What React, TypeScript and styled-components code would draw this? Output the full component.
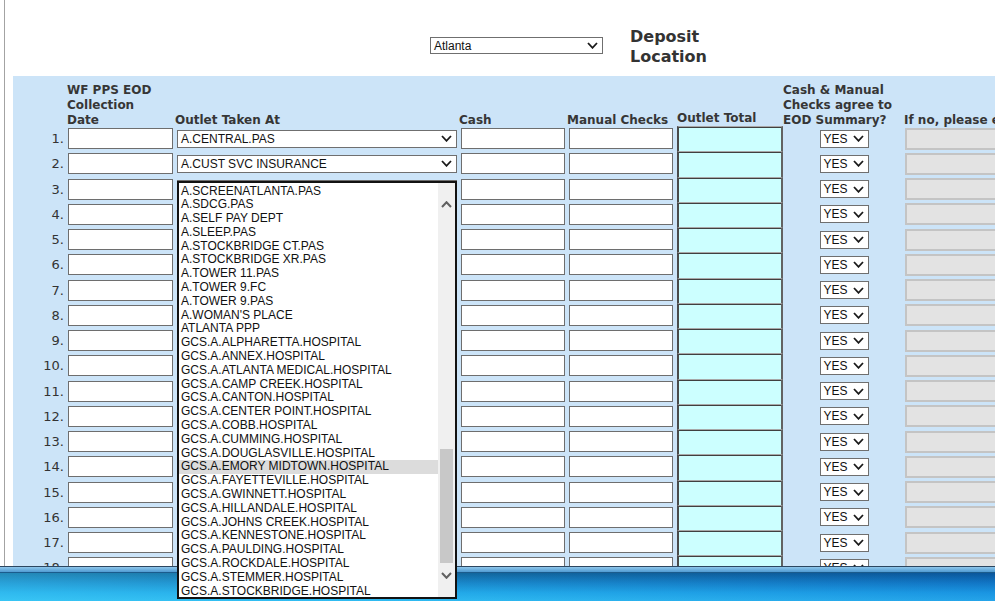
import React from 'react';
import styled, { createGlobalStyle } from 'styled-components';

const GlobalStyle = createGlobalStyle`
  html, body { margin: 0; padding: 0; background: #ffffff; overflow: hidden; }
  * { box-sizing: border-box; }
`;

const COLS = '55px 109px 284px 108px 108px 106px 122px 1fr';

const Page = styled.div`
  position: relative;
  width: 995px;
  height: 606px;
  overflow: hidden;
  padding-left: 4px;
  background: #ffffff;
`;

const Frame = styled.div`
  height: 100%;
  border-left: 1px solid #a3a3a3;
  padding-left: 8px;
  display: flex;
  flex-direction: column;
`;

const TopBar = styled.div`
  height: 76px;
  flex: none;
  display: flex;
  align-items: flex-start;
  padding-left: 417px;
`;

const SelectBox = styled.div<{ $w: number; $h: number }>`
  display: flex;
  align-items: center;
  justify-content: space-between;
  width: ${(p) => p.$w}px;
  height: ${(p) => p.$h}px;
  border: 1px solid #6f6f6f;
  background: #ffffff;
  padding: 0 4px 0 3px;
  font: 12px 'Liberation Sans', Arial, sans-serif;
  color: #111;
  white-space: nowrap;
  overflow: hidden;
`;

const LocationSelect = styled(SelectBox)`
  margin-top: 37px;
`;

const DepositTitle = styled.h2`
  margin: 27px 0 0 27px;
  font: bold 16px/20px 'DejaVu Sans', Verdana, sans-serif;
  color: #333;
`;

const Panel = styled.div`
  flex: 1;
  background: #cce4f8;
  padding-top: 6px;
  overflow: hidden;
`;

const HeadRow = styled.div`
  display: grid;
  grid-template-columns: ${COLS};
  height: 44px;
  align-items: end;
`;

const HeadCell = styled.div<{ $shift?: number; $lift?: number }>`
  font: bold 12px/15px 'DejaVu Sans', Verdana, sans-serif;
  color: #363636;
  white-space: nowrap;
  margin-left: ${(p) => p.$shift ?? 0}px;
  margin-bottom: -2px;
  padding-bottom: ${(p) => p.$lift ?? 0}px;
`;

const Row = styled.div`
  display: grid;
  grid-template-columns: ${COLS};
  height: 25.25px;
`;

const NumCell = styled.div`
  display: flex;
  align-items: center;
  justify-content: flex-end;
  padding-right: 4px;
  font: 13px 'DejaVu Sans', Verdana, sans-serif;
  color: #333;
`;

const FieldCell = styled.div<{ $center?: boolean }>`
  position: relative;
  display: flex;
  align-items: center;
  justify-content: ${(p) => (p.$center ? 'center' : 'flex-start')};
  min-width: 0;
`;

const TextBox = styled.div<{ $w: number }>`
  width: ${(p) => p.$w}px;
  height: 21px;
  border: 1px solid #6e6e6e;
  background: #ffffff;
`;

const GreyBox = styled.div`
  width: 100%;
  height: 22px;
  border: 2px solid #c4c4c4;
  border-right: none;
  background: #e3e3e3;
`;

const TotalCell = styled.div`
  height: 100%;
  background: #ccffff;
  border-left: 2px solid #4a4a4a;
  border-right: 2px solid #626262;
  border-top: 1px solid #a8a8a8;
  box-shadow: inset 0 1px 0 #404040;
`;

const ListBox = styled.div`
  position: absolute;
  left: 0;
  top: 4.5px;
  width: 280px;
  height: 418px;
  border: 2px solid #121212;
  padding-top: 1.5px;
  background: #ffffff;
  display: flex;
  z-index: 10;
`;

const Items = styled.div`
  flex: 1;
  overflow: hidden;
`;

const Item = styled.div<{ $active?: boolean }>`
  height: 13.8px;
  padding-left: 2px;
  font: 12px/13.8px 'Liberation Sans', Arial, sans-serif;
  color: #111;
  white-space: nowrap;
  background: ${(p) => (p.$active ? '#dcdcdc' : 'transparent')};
`;

const ScrollBar = styled.div`
  width: 17px;
  flex: none;
  margin-top: -1.5px;
  background: #f0f0f0;
  display: flex;
  flex-direction: column;
`;

const ScrollBtn = styled.div<{ $h: number }>`
  height: ${(p) => p.$h}px;
  flex: none;
  display: flex;
  align-items: center;
  justify-content: center;
`;

const Track = styled.div`
  flex: 1;
  padding: 0 2px;
`;

const Thumb = styled.div`
  width: 100%;
  background: #c8c8c8;
`;

const ScrollFoot = styled.div`
  height: 12px;
  flex: none;
`;

const Taskbar = styled.div`
  position: absolute;
  left: 0;
  right: 0;
  top: 566px;
  height: 40px;
  z-index: 5;
  display: flex;
  flex-direction: column;
`;

const TaskbarEdge = styled.div`
  height: 7px;
  background: linear-gradient(180deg, #2c4660 0px, #2c4660 1px, #8fc6ea 1px, #4f9bd3 6px, #1b5b8c 6px, #1b5b8c 7px);
`;

const TaskbarBody = styled.div`
  height: 28px;
  background:
    linear-gradient(90deg, rgba(80, 225, 255, 0.35) 0%, rgba(80, 225, 255, 0.1) 40%, rgba(0, 60, 200, 0.15) 100%),
    linear-gradient(180deg, #0c5a92 0%, #147fc4 35%, #1ea4e6 70%, #2bb6ef 100%);
`;

const TaskbarFoot = styled.div`
  height: 5px;
  background: #ffffff;
`;

const Chevron: React.FC<{ color?: string; w?: number; h?: number; up?: boolean; sw?: number }> = ({
  color = '#1a1a1a',
  w = 11,
  h = 7,
  up = false,
  sw = 1.8,
}) => (
  <svg width={w} height={h} viewBox={`0 0 ${w} ${h}`}>
    <polyline
      points={up ? `1,${h - 1} ${w / 2},1.2 ${w - 1},${h - 1}` : `1,1 ${w / 2},${h - 1.2} ${w - 1},1`}
      fill="none"
      stroke={color}
      strokeWidth={sw}
    />
  </svg>
);

const OPTIONS = [
  'A.SCREENATLANTA.PAS',
  'A.SDCG.PAS',
  'A.SELF PAY DEPT',
  'A.SLEEP.PAS',
  'A.STOCKBRIDGE CT.PAS',
  'A.STOCKBRIDGE XR.PAS',
  'A.TOWER 11.PAS',
  'A.TOWER 9.FC',
  'A.TOWER 9.PAS',
  "A.WOMAN'S PLACE",
  'ATLANTA PPP',
  'GCS.A.ALPHARETTA.HOSPITAL',
  'GCS.A.ANNEX.HOSPITAL',
  'GCS.A.ATLANTA MEDICAL.HOSPITAL',
  'GCS.A.CAMP CREEK.HOSPITAL',
  'GCS.A.CANTON.HOSPITAL',
  'GCS.A.CENTER POINT.HOSPITAL',
  'GCS.A.COBB.HOSPITAL',
  'GCS.A.CUMMING.HOSPITAL',
  'GCS.A.DOUGLASVILLE.HOSPITAL',
  'GCS.A.EMORY MIDTOWN.HOSPITAL',
  'GCS.A.FAYETTEVILLE.HOSPITAL',
  'GCS.A.GWINNETT.HOSPITAL',
  'GCS.A.HILLANDALE.HOSPITAL',
  'GCS.A.JOHNS CREEK.HOSPITAL',
  'GCS.A.KENNESTONE.HOSPITAL',
  'GCS.A.PAULDING.HOSPITAL',
  'GCS.A.ROCKDALE.HOSPITAL',
  'GCS.A.STEMMER.HOSPITAL',
  'GCS.A.STOCKBRIDGE.HOSPITAL',
];

const ACTIVE = 'GCS.A.EMORY MIDTOWN.HOSPITAL';
const ROW_OUTLETS: Record<number, string> = { 1: 'A.CENTRAL.PAS', 2: 'A.CUST SVC INSURANCE' };
const THUMB = { top: 224, height: 114 };

const OutletList: React.FC = () => (
  <ListBox>
    <Items>
      {OPTIONS.map((o) => (
        <Item key={o} $active={o === ACTIVE}>
          {o}
        </Item>
      ))}
    </Items>
    <ScrollBar>
      <ScrollBtn $h={42}>
        <Chevron up color="#616161" w={11} h={7} sw={2} />
      </ScrollBtn>
      <Track>
        <Thumb style={{ marginTop: THUMB.top, height: THUMB.height }} />
      </Track>
      <ScrollBtn $h={19}>
        <Chevron color="#616161" w={11} h={7} sw={2} />
      </ScrollBtn>
      <ScrollFoot />
    </ScrollBar>
  </ListBox>
);

const rows = Array.from({ length: 19 }, (_, i) => i + 1);

export default function App() {
  return (
    <Page>
      <GlobalStyle />
      <Frame>
        <TopBar>
          <LocationSelect $w={173} $h={17}>
            <span>Atlanta</span>
            <Chevron w={11} h={7} />
          </LocationSelect>
          <DepositTitle>
            Deposit
            <br />
            Location
          </DepositTitle>
        </TopBar>
        <Panel>
          <HeadRow>
            <div />
            <HeadCell $shift={-1}>
              WF PPS EOD
              <br />
              Collection
              <br />
              Date
            </HeadCell>
            <HeadCell $shift={-2}>Outlet Taken At</HeadCell>
            <HeadCell $shift={-2}>Cash</HeadCell>
            <HeadCell $shift={-2}>Manual Checks</HeadCell>
            <HeadCell $lift={2}>Outlet Total</HeadCell>
            <HeadCell>
              Cash &amp; Manual
              <br />
              Checks agree to
              <br />
              EOD Summary?
            </HeadCell>
            <HeadCell $shift={-1}>If no, please explain</HeadCell>
          </HeadRow>
          {rows.map((n) => (
            <Row key={n}>
              <NumCell>{n}.</NumCell>
              <FieldCell>
                <TextBox $w={105} />
              </FieldCell>
              <FieldCell>
                <SelectBox $w={280} $h={18}>
                  <span>{ROW_OUTLETS[n] ?? ''}</span>
                  <Chevron w={11} h={7} />
                </SelectBox>
                {n === 3 && <OutletList />}
              </FieldCell>
              <FieldCell>
                <TextBox $w={104} />
              </FieldCell>
              <FieldCell>
                <TextBox $w={104} />
              </FieldCell>
              <TotalCell />
              <FieldCell $center>
                <SelectBox $w={49} $h={18}>
                  <span>YES</span>
                  <Chevron w={11} h={7} />
                </SelectBox>
              </FieldCell>
              <FieldCell>
                <GreyBox />
              </FieldCell>
            </Row>
          ))}
        </Panel>
      </Frame>
      <Taskbar>
        <TaskbarEdge />
        <TaskbarBody />
        <TaskbarFoot />
      </Taskbar>
    </Page>
  );
}
